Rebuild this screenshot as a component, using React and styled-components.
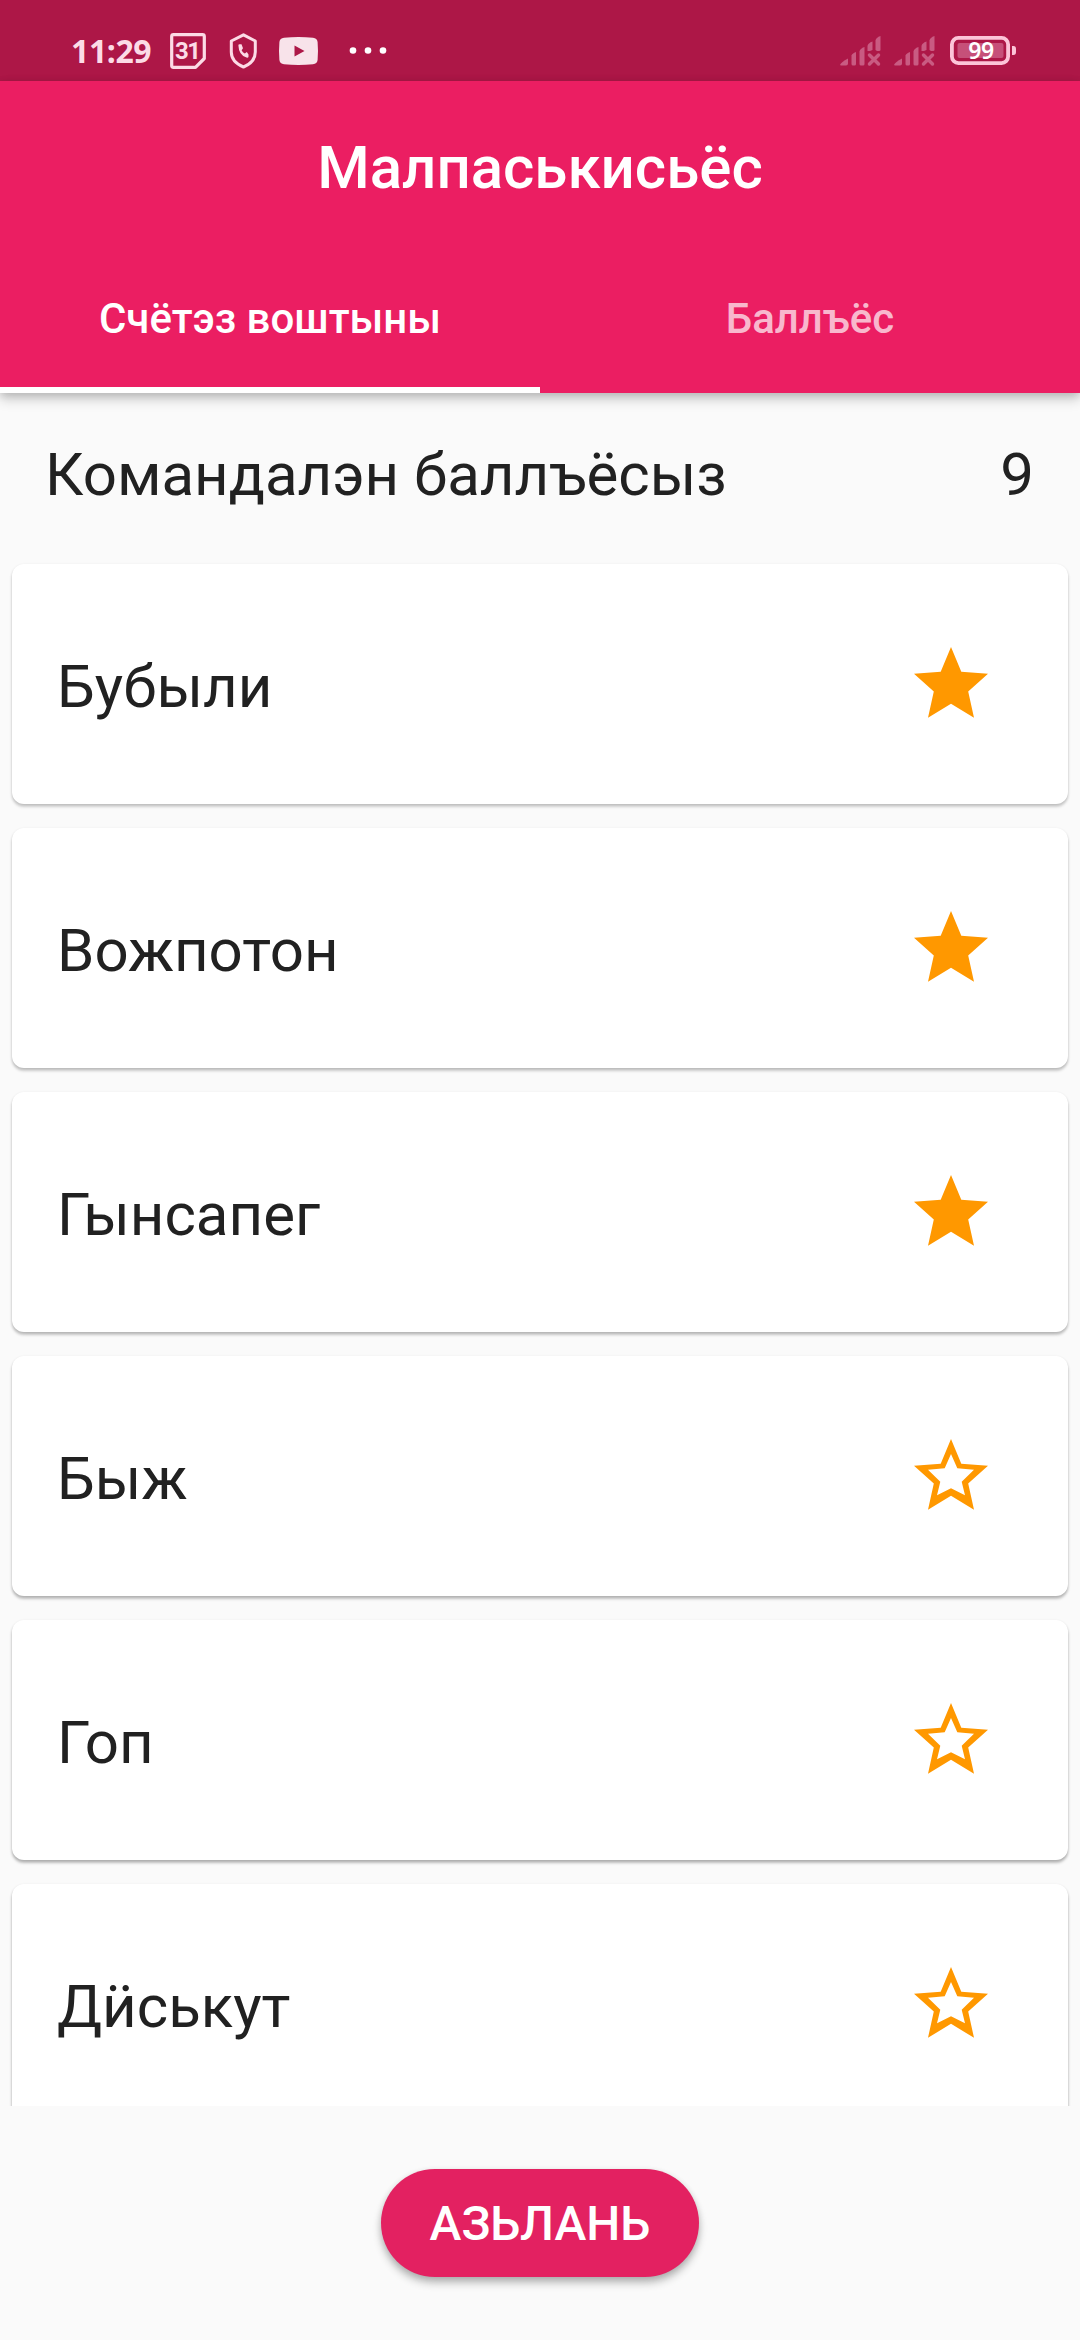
import React from "react";
import styled, { createGlobalStyle } from "styled-components";

const GlobalStyle = createGlobalStyle`
  body {
    margin: 0;
    background-color: #fafafa;
    font-family: Roboto, "Noto Sans", sans-serif;
    color: #212121;
  }
`;

const Screen = styled.div`
  display: flex;
  flex-direction: column;
  width: 1080px;
  height: 2340px;
  overflow: hidden;
  background-color: #fafafa;
`;

const StatusBar = styled.div`
  display: flex;
  align-items: center;
  justify-content: space-between;
  box-sizing: border-box;
  height: 81px;
  padding: 20px 64px 0 71px;
  background-color: #ad1747;
  color: #fcdbe6;
`;

const StatusGroup = styled.div`
  display: flex;
  align-items: center;
`;

const Clock = styled.span`
  width: 99px;
  font-family: "Noto Sans", sans-serif;
  font-size: 32px;
  line-height: 36px;
  font-weight: 700;
  letter-spacing: -0.4px;
`;

const StatusIcon = styled.svg`
  display: block;
  flex: none;
  overflow: visible;
  margin-left: ${(props) => props.$gap || 0}px;
`;

const Header = styled.header`
  position: relative;
  background-color: #eb1e62;
  color: #fff;
  box-shadow: 0 6px 12px rgba(0, 0, 0, 0.2), 0 2px 8px rgba(0, 0, 0, 0.12);
`;

const Title = styled.h1`
  margin: 0;
  height: 168px;
  line-height: 174px;
  font-size: 60px;
  font-weight: 500;
  text-align: center;
`;

const Tabs = styled.div`
  display: grid;
  grid-template-columns: 1fr 1fr;
`;

const Tab = styled.div`
  box-sizing: border-box;
  height: 144px;
  line-height: 140px;
  border-bottom: 6px solid ${(props) => (props.$active ? "#fff" : "transparent")};
  color: ${(props) => (props.$active ? "#fff" : "rgba(255, 255, 255, 0.7)")};
  font-size: 42px;
  font-weight: 500;
  text-align: center;
`;

const Score = styled.div`
  display: flex;
  justify-content: space-between;
  height: 159px;
  flex: none;
  padding: 0 46px 0 45px;
  font-size: 60px;
  line-height: 163px;
`;

const List = styled.div`
  height: 1554px;
  overflow: hidden;
`;

// shadow gets a little heavier towards the bottom of the screen
const Card = styled.div`
  display: flex;
  align-items: center;
  justify-content: space-between;
  box-sizing: border-box;
  height: 240px;
  margin: 12px 12px 24px;
  padding: 0 80px 0 45px;
  border-radius: 12px;
  background-color: #fff;
  box-shadow: 0 3px 3px rgba(0, 0, 0, ${(props) => 0.16 + props.$depth * 0.02}),
    0 1px 3px rgba(0, 0, 0, 0.12);
`;

const Word = styled.span`
  font-size: 60px;
  line-height: 70px;
  padding-top: 6px;
`;

const StarIcon = styled.svg`
  display: block;
  margin-bottom: 4px;
`;

const Footer = styled.div`
  display: flex;
  justify-content: center;
  padding-top: 63px;
`;

const NextButton = styled.button`
  width: 318px;
  height: 108px;
  padding: 0;
  border: none;
  border-radius: 54px;
  background-color: #e32161;
  color: #fff;
  font-family: inherit;
  font-size: 48px;
  font-weight: 500;
  box-shadow: 0 6px 9px rgba(0, 0, 0, 0.24), 0 2px 6px rgba(0, 0, 0, 0.12);
`;

const outer = "M37 0L47.3 24.7L74 26.8L54.2 44.5L60 70.8L37 56.8L14 70.8L19.8 44.5L0 26.8L26.7 24.7Z";
const inner = "M37 15L30.7 29.3L14 30.7L26.3 42.7L23 56.3L37 49.3L51 56.3L47.7 42.7L60 30.7L43.3 29.3Z";

const Star = ({ filled }) => (
  <StarIcon width="74" height="71" viewBox="0 0 74 71">
    <path d={filled ? outer : outer + inner} fill="#ff9800" fillRule="evenodd" />
  </StarIcon>
);

const Signal = ({ gap }) => (
  <StatusIcon $gap={gap} width="41" height="30" viewBox="0 0 41 30" fill="#c95b82">
    <path d="M0 29Q1 26 8 22.5V27.5Q8 29.5 6 29.5H1Z" />
    <path d="M11.5 19.5Q12 17.5 16 16V28Q16 29.5 14.5 29.5H13Q11.5 29.5 11.5 28Z" />
    <path d="M19.5 15.5Q20 12.5 24.5 11V28Q24.5 29.5 23 29.5H21Q19.5 29.5 19.5 28Z" />
    <path d="M27.5 10Q28 7 32.5 5.5V14L30 15H27.5Z" />
    <path d="M35.5 4.5Q36 1.5 40.5 0V14Q40.5 15 39 15H37L35.5 14Z" />
    <path d="M29.5 19L38.5 28M38.5 19L29.5 28" stroke="#c95b82" strokeWidth="3.5" strokeLinecap="round" />
  </StatusIcon>
);

const BatteryText = styled.text`
  font-family: "Noto Sans", sans-serif;
  font-size: 23px;
  font-weight: 600;
  letter-spacing: -0.5px;
`;

const CalendarText = styled.text`
  font-family: Roboto, sans-serif;
  font-size: 24px;
  font-weight: 700;
  letter-spacing: -1.5px;
`;

const words = [
  { text: "Бубыли", done: true },
  { text: "Вожпотон", done: true },
  { text: "Гынсапег", done: true },
  { text: "Быж", done: false },
  { text: "Гоп", done: false },
  { text: "Дӥськут", done: false },
];

export default function App() {
  return (
    <Screen>
      <GlobalStyle />
      <StatusBar>
        <StatusGroup>
          <Clock>11:29</Clock>
          <StatusIcon width="36" height="36" viewBox="0 0 36 36">
            <path
              d="M3.5 1.7H32.5Q34.3 1.7 34.3 3.5V25.5L25.5 34.3H3.5Q1.7 34.3 1.7 32.5V3.5Q1.7 1.7 3.5 1.7Z"
              fill="none"
              stroke="currentColor"
              strokeWidth="3.2"
              strokeLinejoin="round"
            />
            <CalendarText x="17.3" y="25.6" textAnchor="middle" fill="currentColor">31</CalendarText>
          </StatusIcon>
          <StatusIcon $gap={23} width="29" height="36" viewBox="0 0 29 36">
            <path
              d="M14.5 1.8L26.3 8V19Q26.3 29 14.5 34Q2.3 29 2.3 19V8Z"
              fill="none"
              stroke="currentColor"
              strokeWidth="3"
              strokeLinejoin="round"
            />
            <path
              d="M9.4 12.5Q9.2 11.2 10.7 11.2H12.5L14 15.2L12.6 17.2Q13.6 19.4 15.8 20.5L17.8 19L19.5 21.5V23.8Q19.3 25 17.5 24.6Q9.8 22.2 9.4 12.5Z"
              fill="currentColor"
            />
          </StatusIcon>
          <StatusIcon $gap={21} width="39" height="28" viewBox="0 0 39 28">
            <path
              d="M5 .8Q19.5 -.6 34 .8Q38.1 1.2 38.6 5Q39.4 14 38.6 23Q38.1 26.8 34 27.2Q19.5 28.6 5 27.2Q.9 26.8 .4 23Q-.4 14 .4 5Q.9 1.2 5 .8ZM15.5 8.5V19.5L25.5 14Z"
              fill="#f8e3ea"
              fillRule="evenodd"
            />
          </StatusIcon>
          <StatusIcon $gap={31} width="38" height="8" viewBox="0 0 38 8" fill="#fff">
            <circle cx="4" cy="3.5" r="3.3" />
            <circle cx="19" cy="3.5" r="3.3" />
            <circle cx="34" cy="3.5" r="3.3" />
          </StatusIcon>
        </StatusGroup>
        <StatusGroup>
          <Signal />
          <Signal gap={13} />
          <StatusIcon $gap={15} width="66" height="29" viewBox="0 0 66 29">
            <rect x="1.9" y="1.9" width="56.2" height="25.2" rx="6.5" fill="none" stroke="#fcc4d8" strokeWidth="3.8" />
            <rect x="7.5" y="7" width="46" height="15" rx="2" fill="#c65079" />
            <path d="M62 10H63.5Q66 10 66 13V16Q66 19 63.5 19H62Z" fill="#fcc4d8" />
            <BatteryText x="31" y="22.6" textAnchor="middle" fill="#fff">99</BatteryText>
          </StatusIcon>
        </StatusGroup>
      </StatusBar>
      <Header>
        <Title>Малпаськисьёс</Title>
        <Tabs>
          <Tab $active>Счётэз воштыны</Tab>
          <Tab>Баллъёс</Tab>
        </Tabs>
      </Header>
      <Score>
        <span>Командалэн баллъёсыз</span>
        <span>9</span>
      </Score>
      <List>
        {words.map((word, index) => (
          <Card key={word.text} $depth={index}>
            <Word>{word.text}</Word>
            <Star filled={word.done} />
          </Card>
        ))}
      </List>
      <Footer>
        <NextButton>АЗЬЛАНЬ</NextButton>
      </Footer>
    </Screen>
  );
}
